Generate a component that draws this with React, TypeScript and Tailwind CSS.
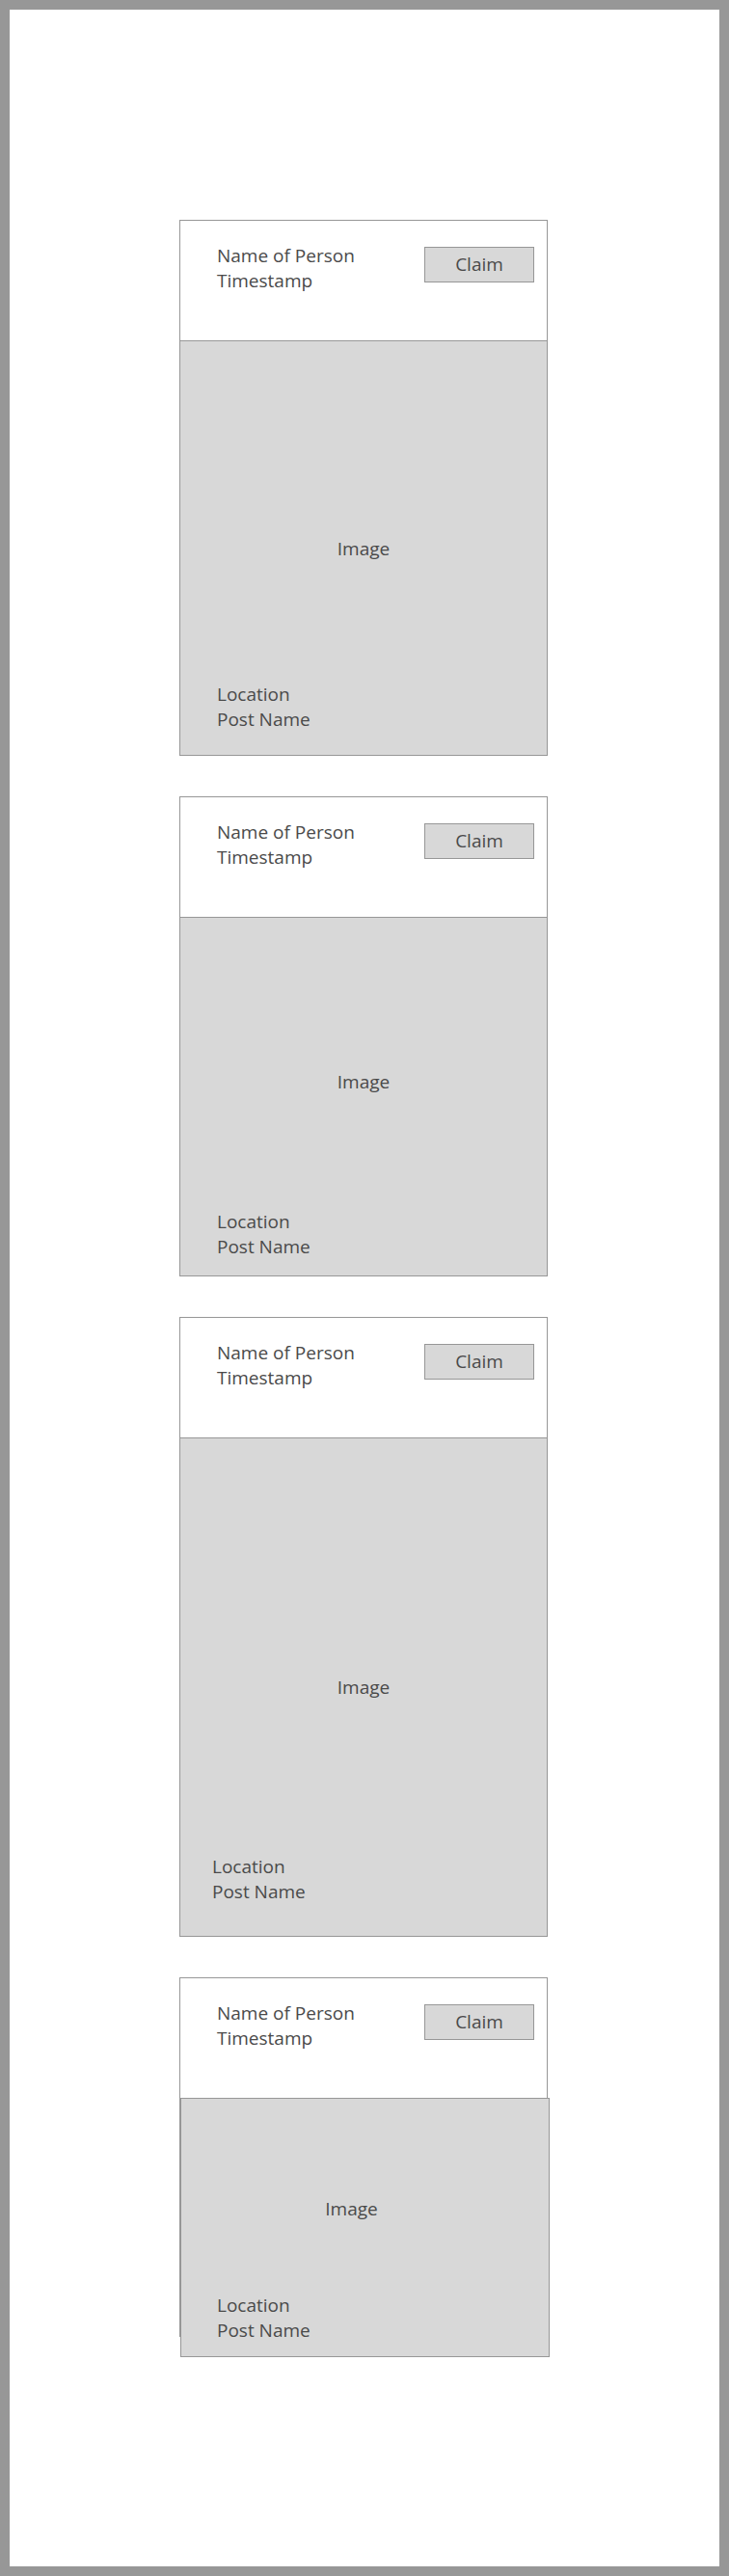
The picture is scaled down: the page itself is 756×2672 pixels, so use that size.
import React from "react";

interface Post {
    id: number;
    imageHeight: number;
    imageOffset: string;
    labelLeft: string;
    labelBottom: string;
}

const posts: Post[] = [
    { id: 1, imageHeight: 429, imageOffset: "mt-[0px]", labelLeft: "ml-[38px]", labelBottom: "mb-[24px]" },
    { id: 2, imageHeight: 371, imageOffset: "mb-[32px]", labelLeft: "ml-[38px]", labelBottom: "mb-[17px]" },
    { id: 3, imageHeight: 516, imageOffset: "mt-[0px]", labelLeft: "ml-[33px]", labelBottom: "mb-[33px]" },
];

function CardHeader({ divider = true }: { divider?: boolean }) {
    return (
        <div className={`flex justify-between items-start h-[125px] pl-[38px] pr-[13px] pt-[23px] ${divider ? "border-b border-[#979797]" : ""}`}>
            <div className="leading-[26px]">
                <p>Name of Person</p>
                <p>Timestamp</p>
            </div>
            <button className="mt-[4px] w-[114px] h-[37px] bg-[#d8d8d8] border border-[#979797] leading-none">
                Claim
            </button>
        </div>
    );
}

function PostCard({ post }: { post: Post }) {
    return (
        <div className="w-[382px] border border-[#979797] bg-white">
            <CardHeader />
            {/* image placeholder */}
            <div className="grid bg-[#d8d8d8]" style={{ height: post.imageHeight }}>
                <span className={`col-start-1 row-start-1 place-self-center leading-[26px] ${post.imageOffset}`}>Image</span>
                <div className={`col-start-1 row-start-1 self-end justify-self-start leading-[26px] ${post.labelLeft} ${post.labelBottom}`}>
                    <p>Location</p>
                    <p>Post Name</p>
                </div>
            </div>
        </div>
    );
}

// last card: image box sits slightly off the frame
function LastCard() {
    return (
        <div className="w-[382px] h-[373px] border border-[#979797] bg-white">
            <div className="h-[124px]">
                <CardHeader divider={false} />
            </div>
            <div className="grid w-[383px] h-[269px] bg-[#d8d8d8] border border-[#979797]">
                <span className="col-start-1 row-start-1 place-self-center leading-[26px] mb-[40px] mr-[28px]">Image</span>
                <div className="col-start-1 row-start-1 self-end justify-self-start leading-[26px] ml-[37px] mb-[14px]">
                    <p>Location</p>
                    <p>Post Name</p>
                </div>
            </div>
        </div>
    );
}

export default function App() {
    return (
        <div
            className="min-h-[2672px] border-[10px] border-[#979797] bg-white text-[19px] text-[#4a4a4a]"
            style={{ fontFamily: "'Open Sans', Lato, sans-serif" }}
        >
            <div className="flex flex-col gap-[42px] pt-[218px] pl-[176px]">
                {posts.map((p) => (
                    <PostCard key={p.id} post={p} />
                ))}
                <LastCard />
            </div>
        </div>
    );
}
